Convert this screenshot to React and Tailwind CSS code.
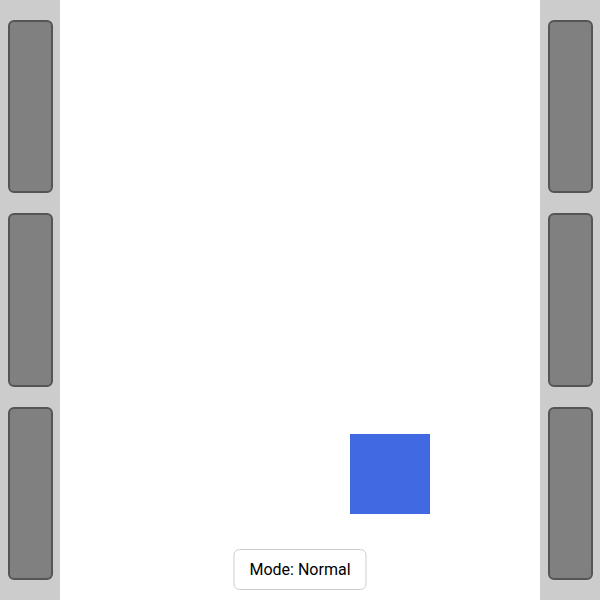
import React from 'react'

const SidePanel = () => (
  <div className='w-[60px] h-full bg-[#cccccc] flex flex-col gap-5 py-5 pl-2 pr-[7px]'>
    {[0, 1, 2].map((i) => (
      <div key={i} className='flex-1 bg-[#808080] border-2 border-[#555555] rounded-md' />
    ))}
  </div>
)

export default function App() {
  return (
    <div className='w-[600px] h-[600px] flex overflow-hidden' style={{ fontFamily: 'Roboto, "Noto Sans", sans-serif' }}>
      <SidePanel />
      <div className='relative flex-1 bg-white'>
        {/* moving block */}
        <div className='absolute left-[290px] top-[434px] w-20 h-20 bg-[#4169e1]' />
        <button className='absolute left-1/2 -translate-x-1/2 top-[549px] h-[41px] pt-px px-[15px] bg-white border border-[#cccccc] rounded-md text-base text-black'>
          Mode: Normal
        </button>
      </div>
      <SidePanel />
    </div>
  )
}
